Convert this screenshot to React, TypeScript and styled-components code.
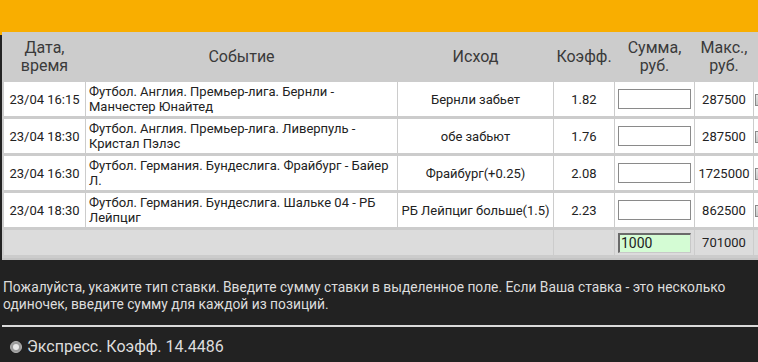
import React from 'react';
import styled, { createGlobalStyle } from 'styled-components';

interface Bet {
  date: string;
  event: string;
  outcome: string;
  coef: string;
  max: string;
}

const bets: Array<Bet> = [
  {
    date: '23/04 16:15',
    event: 'Футбол. Англия. Премьер-лига. Бернли - Манчестер Юнайтед',
    outcome: 'Бернли забьет',
    coef: '1.82',
    max: '287500',
  },
  {
    date: '23/04 18:30',
    event: 'Футбол. Англия. Премьер-лига. Ливерпуль - Кристал Пэлэс',
    outcome: 'обе забьют',
    coef: '1.76',
    max: '287500',
  },
  {
    date: '23/04 16:30',
    event: 'Футбол. Германия. Бундеслига. Фрайбург - Байер Л.',
    outcome: 'Фрайбург(+0.25)',
    coef: '2.08',
    max: '1725000',
  },
  {
    date: '23/04 18:30',
    event: 'Футбол. Германия. Бундеслига. Шальке 04 - РБ Лейпциг',
    outcome: 'РБ Лейпциг больше(1.5)',
    coef: '2.23',
    max: '862500',
  },
];

const GlobalStyle = createGlobalStyle`
  html, body {
    margin: 0;
    padding: 0;
    background: #222222;
    overflow: hidden;
  }
  body {
    font-family: Roboto, "Liberation Sans", sans-serif;
  }
`;

const Page = styled.div`
  width: 758px;
  height: 362px;
  overflow: hidden;
  background: #222222;
`;

const TopBar = styled.div`
  height: 35px;
  background: #f9ae00;
`;

const TableWrap = styled.div`
  margin-left: 2px;
  padding-left: 1px;
  width: 792px;
  background: #cccccc;
  border-bottom: 2px solid #c4c4c4;
`;

const Table = styled.table`
  border-collapse: separate;
  border-spacing: 1px 3px;
  margin-top: -3px;
  table-layout: fixed;
  width: 792px;
  font-size: 13px;
  color: #222222;
`;

const Head = styled.th<{ $w: number }>`
  width: ${(p) => p.$w}px;
  height: 44px;
  padding: 0;
  font-size: 16px;
  font-weight: 400;
  line-height: 18px;
  color: #3a3a3a;
  text-align: center;
  vertical-align: middle;
`;

const Cell = styled.td<{ $align?: string; $pad?: number }>`
  background: #ffffff;
  height: 34px;
  padding: 0 ${(p) => (p.$pad !== undefined ? p.$pad : 3)}px;
  line-height: 15px;
  text-align: ${(p) => p.$align || 'center'};
  vertical-align: middle;
  overflow: hidden;
`;

const FootCell = styled.td`
  background: #dcdcdc;
  height: 25px;
  padding: 0 3px;
  text-align: center;
  vertical-align: middle;
`;

const SumInput = styled.input<{ $green?: boolean }>`
  box-sizing: border-box;
  width: 73px;
  height: 20px;
  margin: 0;
  padding: 0 1px;
  font-family: Roboto, "Liberation Sans", sans-serif;
  font-size: 14px;
  color: #222222;
  background: ${(p) => (p.$green ? '#d4fcd4' : '#ffffff')};
  border-style: solid;
  border-color: ${(p) => (p.$green ? '#6a6a6a #c8c8c8 #c8c8c8 #6a6a6a' : '#8a8a8a')};
  border-width: ${(p) => (p.$green ? '2px 1px 1px 2px' : '1px')};
  outline: none;
`;

const CheckBox = styled.span`
  display: inline-block;
  width: 12px;
  height: 12px;
  box-sizing: border-box;
  border: 1px solid #8a8a8a;
  background: linear-gradient(#e8e8e8, #c8c8c8);
  vertical-align: middle;
`;

const Note = styled.p`
  margin: 0;
  padding: 19px 3px 0;
  font-size: 13.8px;
  line-height: 17px;
  color: #dddddd;
`;

const Divider = styled.hr`
  margin: 12px 0 0 2px;
  border: none;
  border-top: 2px solid #dadada;
`;

const ExpressRow = styled.label`
  display: flex;
  align-items: center;
  gap: 5px;
  padding: 10px 0 0 10px;
  font-size: 16px;
  color: #dddddd;
`;

const Radio = styled.span`
  display: inline-block;
  box-sizing: border-box;
  width: 12px;
  height: 12px;
  border-radius: 50%;
  background: #9a9a9a;
  border: 1px solid #b0b0b0;
  position: relative;
  &::after {
    content: '';
    position: absolute;
    left: 2px;
    top: 2px;
    width: 6px;
    height: 6px;
    border-radius: 50%;
    background: #e8e8e8;
  }
`;

const App = () => {
  return (
    <Page>
      <GlobalStyle />
      <TopBar />
      <TableWrap>
        <Table>
          <thead>
            <tr>
              <Head $w={81}>
                Дата,
                <br />
                время
              </Head>
              <Head $w={311}>Событие</Head>
              <Head $w={155}>Исход</Head>
              <Head $w={60}>Коэфф.</Head>
              <Head $w={79}>
                Сумма,
                <br />
                руб.
              </Head>
              <Head $w={58}>
                Макс.,
                <br />
                руб.
              </Head>
              <Head $w={40}></Head>
            </tr>
          </thead>
          <tbody>
            {bets.map((bet, index) => (
              <tr key={index}>
                <Cell>{bet.date}</Cell>
                <Cell $align="left">{bet.event}</Cell>
                <Cell>{bet.outcome}</Cell>
                <Cell>{bet.coef}</Cell>
                <Cell>
                  <SumInput type="text" defaultValue="" />
                </Cell>
                <Cell $pad={1}>{bet.max}</Cell>
                <Cell $align="left" $pad={1}>
                  <CheckBox />
                </Cell>
              </tr>
            ))}
            <tr>
              <FootCell colSpan={3}></FootCell>
              <FootCell></FootCell>
              <FootCell>
                <SumInput type="text" $green defaultValue="1000" />
              </FootCell>
              <FootCell>701000</FootCell>
              <FootCell></FootCell>
            </tr>
          </tbody>
        </Table>
      </TableWrap>
      <Note>
        Пожалуйста, укажите тип ставки. Введите сумму ставки в выделенное поле. Если Ваша ставка - это несколько
        одиночек, введите сумму для каждой из позиций.
      </Note>
      <Divider />
      <ExpressRow>
        <Radio />
        Экспресс. Коэфф. 14.4486
      </ExpressRow>
    </Page>
  );
};

export default App;
